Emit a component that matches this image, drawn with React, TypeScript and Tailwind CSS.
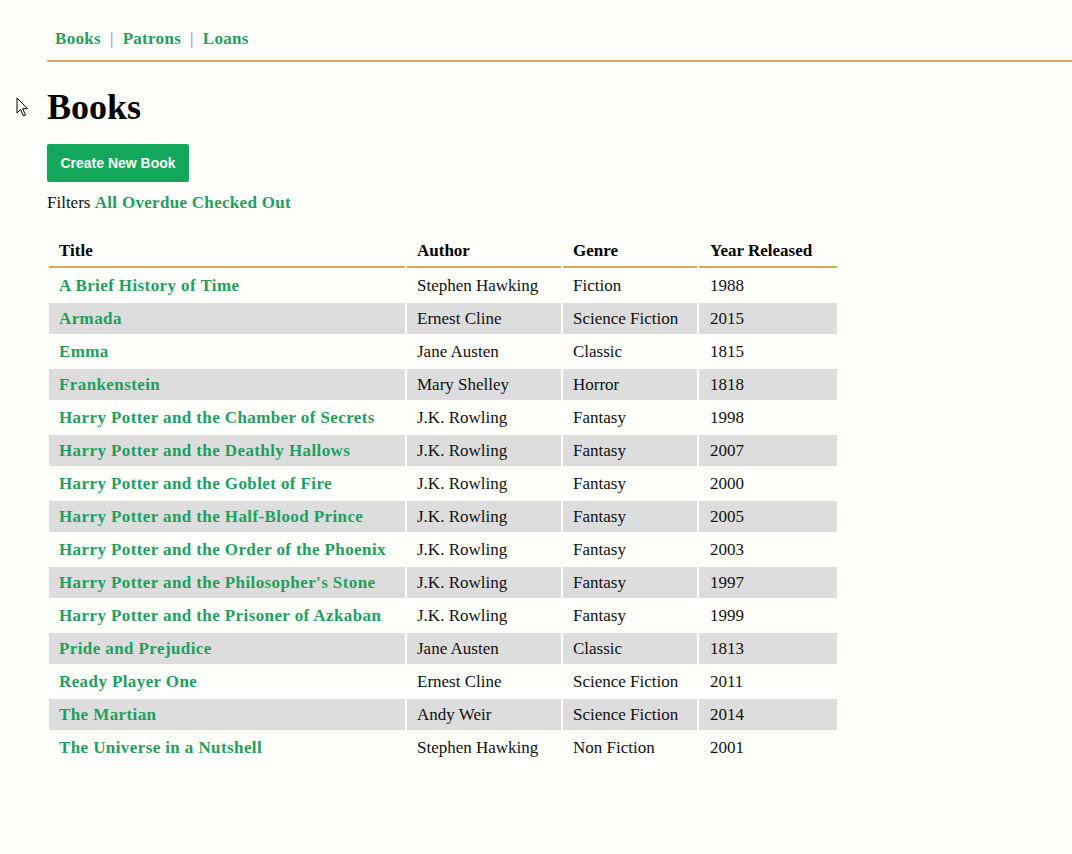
import React from "react";

const books: [string, string, string, string][] = [
  ["A Brief History of Time", "Stephen Hawking", "Fiction", "1988"],
  ["Armada", "Ernest Cline", "Science Fiction", "2015"],
  ["Emma", "Jane Austen", "Classic", "1815"],
  ["Frankenstein", "Mary Shelley", "Horror", "1818"],
  ["Harry Potter and the Chamber of Secrets", "J.K. Rowling", "Fantasy", "1998"],
  ["Harry Potter and the Deathly Hallows", "J.K. Rowling", "Fantasy", "2007"],
  ["Harry Potter and the Goblet of Fire", "J.K. Rowling", "Fantasy", "2000"],
  ["Harry Potter and the Half-Blood Prince", "J.K. Rowling", "Fantasy", "2005"],
  ["Harry Potter and the Order of the Phoenix", "J.K. Rowling", "Fantasy", "2003"],
  ["Harry Potter and the Philosopher's Stone", "J.K. Rowling", "Fantasy", "1997"],
  ["Harry Potter and the Prisoner of Azkaban", "J.K. Rowling", "Fantasy", "1999"],
  ["Pride and Prejudice", "Jane Austen", "Classic", "1813"],
  ["Ready Player One", "Ernest Cline", "Science Fiction", "2011"],
  ["The Martian", "Andy Weir", "Science Fiction", "2014"],
  ["The Universe in a Nutshell", "Stephen Hawking", "Non Fiction", "2001"],
];

export default function App() {
  return (
    <div
      className="relative min-h-[854px] bg-[#fffffc] text-[#111] text-[17px]"
      style={{ fontFamily: '"Liberation Serif", "Times New Roman", serif' }}
    >
      <svg
        className="absolute left-[16px] top-[97px]"
        width="14"
        height="21"
        viewBox="0 0 14 21"
      >
        <path
          d="M1 1 L1 16 L4.5 12.5 L7.5 19 L9.5 18 L6.7 11.7 L11.5 11.7 Z"
          fill="#fff"
          stroke="#000"
          strokeWidth="1"
          strokeLinejoin="miter"
        />
      </svg>

      <nav className="ml-[47px] pt-[28px] pb-[10px] pl-[8px] border-b-2 border-[#d9a85a] flex items-center leading-[22px] font-bold text-[#1f9f5f] tracking-[0.3px]">
        <a href="#">Books</a>
        <span className="mx-[9px] font-normal text-[#888]">|</span>
        <a href="#">Patrons</a>
        <span className="mx-[9px] font-normal text-[#888]">|</span>
        <a href="#">Loans</a>
      </nav>

      <div className="ml-[47px]">
        <h1 className="mt-[23px] text-[36px] leading-[44px] font-bold text-black">Books</h1>
        <button
          className="mt-[15px] h-[38px] w-[142px] rounded-[2px] bg-[#12a75a] text-white text-[14px] font-bold"
          style={{ fontFamily: '"Liberation Sans", Arial, sans-serif' }}
        >
          Create New Book
        </button>
        <div className="mt-[10px] leading-[22px]">
          Filters{" "}
          <a href="#" className="font-bold text-[#1f9f5f] tracking-[0.3px]">
            All Overdue Checked Out
          </a>
        </div>

        <table className="mt-[18px] border-separate border-spacing-[2px] text-left">
          <thead>
            <tr>
              <th className="w-[356px] pl-[10px] pt-[7px] pb-[5px] leading-[20px] border-b-2 border-[#d9a85a] font-bold text-black">Title</th>
              <th className="w-[154px] pl-[10px] pt-[7px] pb-[5px] leading-[20px] border-b-2 border-[#d9a85a] font-bold text-black">Author</th>
              <th className="w-[134px] pl-[10px] pt-[7px] pb-[5px] leading-[20px] border-b-2 border-[#d9a85a] font-bold text-black">Genre</th>
              <th className="w-[138px] pl-[11px] pt-[7px] pb-[5px] leading-[20px] border-b-2 border-[#d9a85a] font-bold text-black">Year Released</th>
            </tr>
          </thead>
          <tbody>
            {books.map(([t, a, g, y], i) => {
              const bg = i % 2 === 1 ? "bg-[#dddddd]" : "";
              return (
                <tr key={t}>
                  <td className={`${bg} h-[31px] pl-[10px] leading-[21px] font-bold text-[#1f9f5f] tracking-[0.4px]`}>
                    <a href="#">{t}</a>
                  </td>
                  <td className={`${bg} h-[31px] pl-[10px] leading-[21px]`}>{a}</td>
                  <td className={`${bg} h-[31px] pl-[10px] leading-[21px]`}>{g}</td>
                  <td className={`${bg} h-[31px] pl-[11px] leading-[21px]`}>{y}</td>
                </tr>
              );
            })}
          </tbody>
        </table>
      </div>
    </div>
  );
}
